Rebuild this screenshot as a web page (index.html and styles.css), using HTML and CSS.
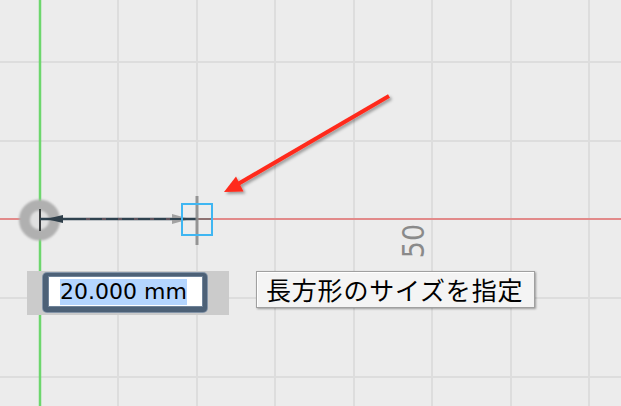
FILE: index.html
```html
<!DOCTYPE html>
<html lang="ja">
<head>
<meta charset="utf-8">
<title>Sketch dimension</title>
<link rel="stylesheet" href="styles.css">
</head>
<body>
<div class="canvas">
  <svg class="sketch" width="621" height="406" viewBox="0 0 621 406" xmlns="http://www.w3.org/2000/svg">
    <defs>
      <filter id="shadow" x="-20%" y="-20%" width="140%" height="140%">
        <feDropShadow dx="2" dy="2" stdDeviation="1.4" flood-color="#000" flood-opacity="0.35"/>
      </filter>
      <filter id="soft" x="-30%" y="-30%" width="160%" height="160%">
        <feGaussianBlur stdDeviation="0.8"/>
      </filter>
    </defs>
    <g class="grid">
      <line x1="118" y1="0" x2="118" y2="406"/>
      <line x1="197" y1="0" x2="197" y2="406"/>
      <line x1="275" y1="0" x2="275" y2="406"/>
      <line x1="354" y1="0" x2="354" y2="406"/>
      <line x1="432" y1="0" x2="432" y2="406"/>
      <line x1="511" y1="0" x2="511" y2="406"/>
      <line x1="589" y1="0" x2="589" y2="406"/>
      <line x1="0" y1="62" x2="621" y2="62"/>
      <line x1="0" y1="141" x2="621" y2="141"/>
      <line x1="0" y1="298" x2="621" y2="298"/>
      <line x1="0" y1="377" x2="621" y2="377"/>
    </g>
    <line class="axis-x" x1="0" y1="219" x2="621" y2="219"/>
    <line class="axis-y" x1="40" y1="0" x2="40" y2="406"/>

    <g filter="url(#soft)">
      <circle cx="39.5" cy="220" r="15" fill="#e0e0e0" stroke="#b0b0b0" stroke-width="11"/>
    </g>
    <line x1="40" y1="209" x2="40" y2="231" stroke="#3a3d3f" stroke-width="2"/>

    <line x1="40" y1="219" x2="197" y2="219" stroke="#2f424f" stroke-width="2.5"/>
    <line x1="86" y1="219" x2="180" y2="219" stroke="#c47a7a" stroke-width="2" stroke-dasharray="4 12" opacity="0.35"/>
    <polygon points="46,219 63,215 63,223" fill="#2f3f4a"/>
    <polygon points="172,214 190,219 172,224" fill="#9a9a9a" opacity="0.9"/>
    <line x1="172" y1="219" x2="197" y2="219" stroke="#2f424f" stroke-width="2"/>

    <line x1="197" y1="219" x2="212" y2="219" stroke="#8e7272" stroke-width="2"/>
    <line x1="197" y1="196" x2="197" y2="245" stroke="#8d8d8d" stroke-width="3" opacity="0.9"/>
    <rect x="182" y="204" width="30" height="31" fill="none" stroke="#3fb6f2" stroke-width="2"/>

    <g filter="url(#shadow)">
      <line x1="389" y1="96" x2="238" y2="184" stroke="#ff2b1c" stroke-width="4"/>
      <polygon points="224,192 236,176.5 243.5,191.5" fill="#ff2b1c"/>
    </g>
  </svg>

  <div class="dim-label">50</div>

  <div class="input-panel">
    <div class="input-field"><span class="selection">20.000 mm</span></div>
  </div>

  <div class="tooltip">長方形のサイズを指定</div>
</div>
</body>
</html>
```
FILE: styles.css
```css
html, body {
  margin: 0;
  padding: 0;
  background: #ececec;
}

.canvas {
  position: relative;
  width: 621px;
  height: 406px;
  overflow: hidden;
  background: #ececec;
}

.sketch {
  position: absolute;
  left: 0;
  top: 0;
  display: block;
}

.grid line {
  stroke: #dddddd;
  stroke-width: 2;
}

.axis-x {
  stroke: #e28a8a;
  stroke-width: 2;
}

.axis-y {
  stroke: #6dd66d;
  stroke-width: 2.5;
}

.dim-label {
  position: absolute;
  left: 394px;
  top: 226px;
  width: 40px;
  height: 30px;
  line-height: 30px;
  text-align: center;
  font-family: "DejaVu Sans Condensed", "DejaVu Sans", sans-serif;
  font-stretch: condensed;
  font-size: 30px;
  color: #8a8a8a;
  transform: rotate(-90deg);
  transform-origin: 50% 50%;
}

.input-panel {
  position: absolute;
  left: 27px;
  top: 271px;
  width: 202px;
  height: 44px;
  box-sizing: border-box;
  padding: 2px 0 0 16px;
  background: #cbcbcb;
}

.input-field {
  display: flex;
  align-items: center;
  width: 164px;
  height: 39px;
  box-sizing: border-box;
  padding-left: 12px;
  background: #ffffff;
  border-style: solid;
  border-color: #4d6177;
  border-width: 3px 4px 5px 5px;
  border-radius: 4px;
  box-shadow: 0 0 0 1px #8394a8, inset 0 0 0 1px #6f8399;
}

.selection {
  display: inline-block;
  background: #b4d5fe;
  color: #000000;
  font-family: "DejaVu Sans", sans-serif;
  font-size: 22px;
  line-height: 26px;
  white-space: nowrap;
}

.tooltip {
  position: absolute;
  left: 256px;
  top: 271px;
  width: 279px;
  height: 37px;
  box-sizing: border-box;
  display: flex;
  align-items: center;
  padding-left: 9px;
  background: #f4f4f4;
  border: 1px solid #a0a0a0;
  box-shadow: inset 1px 1px 0 #ffffff, 1px 1px 2px rgba(0, 0, 0, 0.35);
  font-family: "Noto Sans CJK JP", sans-serif;
  font-size: 25px;
  letter-spacing: 0.8px;
  line-height: 1;
  color: #000000;
  white-space: nowrap;
}
```
